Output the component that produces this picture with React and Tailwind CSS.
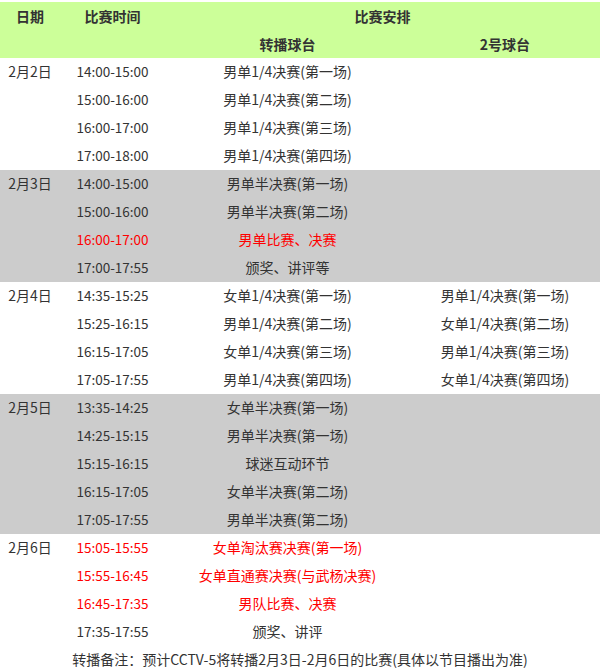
import React from 'react';

const groups = [
  {
    date: '2月2日',
    bg: 'bg-white',
    rows: [
      ['14:00-15:00', '男单1/4决赛(第一场)', ''],
      ['15:00-16:00', '男单1/4决赛(第二场)', ''],
      ['16:00-17:00', '男单1/4决赛(第三场)', ''],
      ['17:00-18:00', '男单1/4决赛(第四场)', ''],
    ],
  },
  {
    date: '2月3日',
    bg: 'bg-[#cccccc]',
    rows: [
      ['14:00-15:00', '男单半决赛(第一场)', ''],
      ['15:00-16:00', '男单半决赛(第二场)', ''],
      ['16:00-17:00', '男单比赛、决赛', '', true],
      ['17:00-17:55', '颁奖、讲评等', ''],
    ],
  },
  {
    date: '2月4日',
    bg: 'bg-white',
    rows: [
      ['14:35-15:25', '女单1/4决赛(第一场)', '男单1/4决赛(第一场)'],
      ['15:25-16:15', '男单1/4决赛(第二场)', '女单1/4决赛(第二场)'],
      ['16:15-17:05', '女单1/4决赛(第三场)', '男单1/4决赛(第三场)'],
      ['17:05-17:55', '男单1/4决赛(第四场)', '女单1/4决赛(第四场)'],
    ],
  },
  {
    date: '2月5日',
    bg: 'bg-[#cccccc]',
    rows: [
      ['13:35-14:25', '女单半决赛(第一场)', ''],
      ['14:25-15:15', '男单半决赛(第一场)', ''],
      ['15:15-16:15', '球迷互动环节', ''],
      ['16:15-17:05', '女单半决赛(第二场)', ''],
      ['17:05-17:55', '男单半决赛(第二场)', ''],
    ],
  },
  {
    date: '2月6日',
    bg: 'bg-white',
    rows: [
      ['15:05-15:55', '女单淘汰赛决赛(第一场)', '', true],
      ['15:55-16:45', '女单直通赛决赛(与武杨决赛)', '', true],
      ['16:45-17:35', '男队比赛、决赛', '', true],
      ['17:35-17:55', '颁奖、讲评', ''],
    ],
  },
];

const App = () => {
  return (
    <div
      className="w-[604px] h-[672px] bg-white text-[#333333] text-[14px] pt-[2px]"
      style={{ fontFamily: '"Noto Sans CJK SC", sans-serif' }}
    >
      <div className="w-[600px]">
        {/* header */}
        <div className="bg-[#ccff99] font-bold grid grid-cols-[60px_105px_245px_190px] grid-rows-[28px_28px] items-center text-center">
          <div>日期</div>
          <div>比赛时间</div>
          <div className="col-span-2">比赛安排</div>
          <div></div>
          <div></div>
          <div>转播球台</div>
          <div>2号球台</div>
        </div>

        {groups.map((g) => (
          <div key={g.date} className={`flex ${g.bg}`}>
            <div className="w-[60px] h-[28px] pb-px flex items-center justify-center shrink-0">
              {g.date}
            </div>
            <div className="flex flex-col">
              {g.rows.map((r) => (
                <div
                  key={r[0]}
                  className={`grid grid-cols-[105px_245px_190px] h-[28px] pb-px items-center text-center ${
                    r[3] ? 'text-[#ff0000]' : ''
                  }`}
                >
                  <div className="text-[13.5px] tabular-nums">{r[0]}</div>
                  <div>{r[1]}</div>
                  <div>{r[2]}</div>
                </div>
              ))}
            </div>
          </div>
        ))}

        <div className="h-[26px] flex items-center justify-center">
          转播备注：预计CCTV-5将转播2月3日-2月6日的比赛(具体以节目播出为准)
        </div>
      </div>
    </div>
  );
};

export default App;
